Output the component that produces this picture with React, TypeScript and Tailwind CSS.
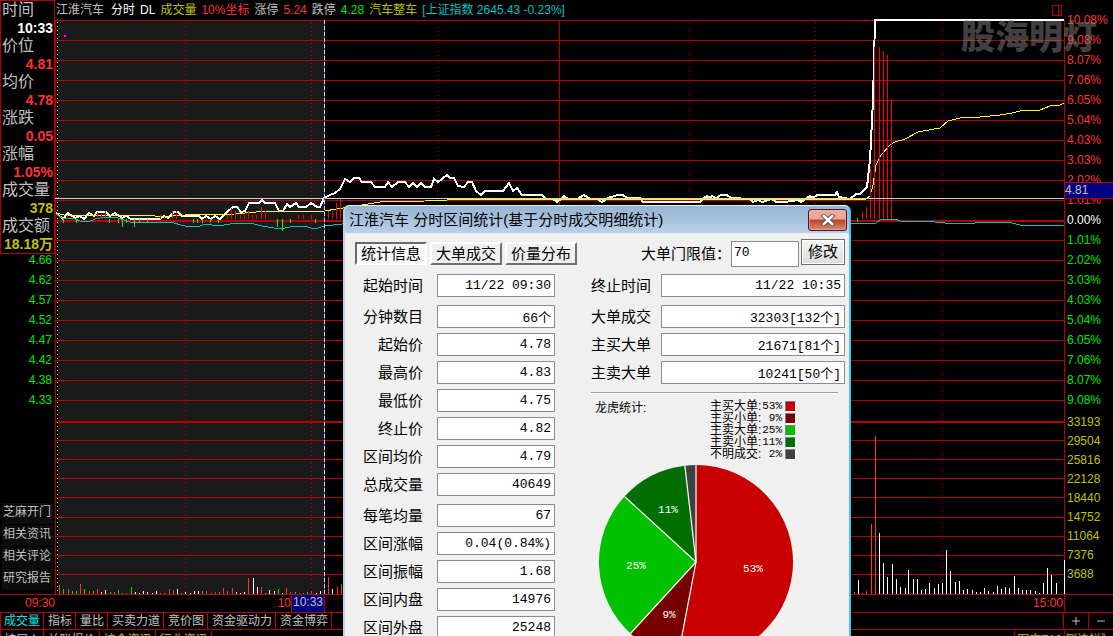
import React from "react";
import { Minus, Plus } from "lucide-react";

const SANS = "font-['Liberation_Sans','Noto_Sans_CJK_SC',sans-serif]";
const MONO = "font-['Liberation_Mono','Noto_Sans_CJK_SC',monospace]";

const quote = [
  { label: "时间", value: "10:33", tone: "text-white" },
  { label: "价位", value: "4.81", tone: "text-[#ff3232]" },
  { label: "均价", value: "4.78", tone: "text-[#ff3232]" },
  { label: "涨跌", value: "0.05", tone: "text-[#ff3232]" },
  { label: "涨幅", value: "1.05%", tone: "text-[#ff3232]" },
  { label: "成交量", value: "378", tone: "text-[#c0c000]" },
  { label: "成交额", value: "18.18万", tone: "text-[#c0c000]" },
];

const lowPrices = ["4.66", "4.62", "4.57", "4.52", "4.47", "4.42", "4.38", "4.33"];
const sideLinks = ["芝麻开门", "相关资讯", "相关评论", "研究报告"];
const upPercents = ["10.08%", "9.08%", "8.07%", "7.06%", "6.05%", "5.04%", "4.03%", "3.03%", "2.02%", "1.01%"];
const downPercents = ["1.01%", "2.02%", "3.03%", "4.03%", "5.04%", "6.05%", "7.06%", "8.07%", "9.08%"];
const volumes = ["33193", "29504", "25816", "22128", "18440", "14752", "11064", "7376", "3688"];

const gridRows = [
  20, 40, 60, 80, 100, 120, 140, 160, 180, 200, 240, 260, 280, 300, 320, 340, 360, 380, 400,
  440, 459, 478, 497, 517, 536, 555, 574, 594,
];
const dottedColumns = [185, 311, 437, 689, 815, 942];

const priceLine =
  "56,213 63,219 68,213 75,218 80,216 84,219 89,213 94,216 97,212 106,212 110,216 115,213 122,218 126,216 131,219 160,219 164,216 168,218 174,212 178,212 182,216 199,216 202,219 206,216 211,219 215,216 220,219 227,212 233,207 237,207 241,212 245,211 249,203 259,203 262,200 265,203 275,203 279,211 283,211 287,204 290,207 296,203 299,207 306,207 311,203 317,207 320,207 324,198 330,195 335,193 340,189 345,179 350,182 354,178 359,178 362,182 371,182 375,187 385,187 388,182 392,187 398,182 405,182 409,187 413,183 417,187 421,183 425,187 431,187 434,179 438,182 447,175 450,178 454,178 458,186 464,187 468,182 472,182 476,191 481,195 485,191 503,191 509,183 513,191 517,188 522,195 542,195 546,199 553,199 557,202 561,199 564,196 568,199 577,199 584,195 590,199 597,199 602,202 608,198 618,195 623,195 627,198 640,198 643,202 700,202 704,198 707,196 709,198 712,196 716,198 721,195 727,195 731,198 750,199 753,202 758,200 762,202 772,199 776,202 785,202 798,200 801,202 807,198 810,196 813,198 817,195 835,195 837,192 839,197 850,199 856,194 860,194 867,187 870,160 873,100 875,20 1064,20";
const averageLine =
  "56,213 64,215 83,216 92,215 150,215 160,217 185,215 235,214 256,212 275,211 324,211 350,207 380,202 425,201 447,200 660,199 866,199 870,196 873,185 876,165 881,155 890,145 895,142 905,139 918,132 940,128 948,121 960,118 980,117 1000,115 1012,113 1020,111 1040,110 1050,106 1060,105 1064,103";
const indexLine =
  "56,214 62,218 75,219 80,221 88,222 95,219 105,217 118,218 130,222 150,223 170,222 185,226 200,226 206,224 218,226 230,224 250,223 262,226 280,229 290,227 305,226 314,229 325,226 342,224 852,223 876,223 881,219 895,219 900,221 935,222 955,224 975,223 1000,222 1012,223 1020,225 1045,226 1064,225";

const momentum: [number, number, number, string][] = [
  [67, 215, 219, "#f00"], [97, 212, 219, "#f00"], [101, 214, 219, "#f00"], [105, 211, 219, "#f00"],
  [160, 215, 219, "#f00"], [172, 211, 219, "#f00"], [176, 211, 219, "#f00"], [227, 215, 219, "#f00"],
  [231, 208, 219, "#f00"], [235, 211, 219, "#f00"], [240, 215, 219, "#f00"], [244, 215, 219, "#f00"],
  [248, 211, 219, "#f00"], [252, 215, 219, "#f00"], [256, 215, 219, "#f00"], [261, 207, 219, "#f00"],
  [265, 211, 219, "#f00"], [298, 215, 219, "#f00"], [303, 215, 219, "#f00"], [311, 215, 219, "#f00"],
  [328, 211, 219, "#f00"], [332, 211, 219, "#f00"], [336, 203, 219, "#f00"], [340, 199, 219, "#f00"],
  [862, 211, 219, "#f00"], [866, 207, 219, "#f00"], [870, 166, 219, "#f00"], [874, 47, 219, "#f00"],
  [879, 47, 219, "#f00"], [883, 51, 219, "#f00"], [887, 55, 219, "#f00"], [891, 99, 219, "#f00"],
  [63, 219, 223, "#0f0"], [76, 219, 223, "#0f0"], [109, 219, 223, "#0f0"], [118, 219, 223, "#0f0"],
  [122, 219, 227, "#0f0"], [126, 219, 223, "#0f0"], [134, 219, 227, "#0f0"], [139, 219, 223, "#0f0"],
  [147, 219, 223, "#0f0"], [193, 219, 223, "#0f0"], [197, 219, 223, "#0f0"], [202, 219, 223, "#0f0"],
  [210, 219, 223, "#0f0"], [218, 219, 223, "#0f0"], [277, 219, 227, "#0f0"], [282, 219, 231, "#0f0"],
  [290, 219, 223, "#0f0"], [315, 219, 223, "#0f0"], [857, 218, 222, "#0f0"],
];

const R = "#ff3232";
const W = "#ffffff";
const G = "#00e600";
const trades: [number, number, string][] = [
  [59, 9, R], [63, 5, G], [68, 5, R], [72, 3, G], [76, 3, G], [80, 10, R], [84, 5, G], [89, 3, R], [93, 3, G],
  [97, 5, R], [101, 2, W], [105, 4, W], [110, 2, G], [114, 2, R], [118, 4, G], [122, 1, G], [126, 1, R],
  [131, 7, G], [135, 2, W], [139, 1, W], [143, 3, W], [147, 2, W], [152, 1, W], [156, 3, W], [160, 1, R],
  [164, 1, G], [169, 5, R], [173, 4, R], [177, 5, W], [181, 1, G], [185, 2, W], [190, 1, W], [194, 3, W],
  [198, 3, W], [202, 3, G], [206, 3, R], [211, 1, G], [215, 2, R], [219, 2, G], [223, 6, R], [227, 3, R],
  [232, 6, R], [236, 2, W], [240, 1, W], [244, 2, W], [248, 16, R], [253, 16, W], [257, 7, W], [261, 7, R],
  [265, 1, G], [269, 4, W], [274, 3, W], [278, 5, G], [282, 1, W], [286, 6, R], [290, 2, R], [295, 2, G],
  [299, 1, R], [303, 1, G], [307, 2, G], [311, 3, R], [316, 1, W], [320, 3, W], [328, 17, R], [332, 5, W],
  [337, 7, R], [341, 10, R],
  [854, 2, R], [858, 14, W], [862, 1, R], [866, 3, R], [871, 70, R], [875, 158, R], [879, 61, W], [883, 31, W],
  [887, 17, W], [892, 30, W], [896, 15, W], [900, 7, W], [905, 6, W], [908, 24, W], [913, 15, W], [917, 15, W],
  [921, 4, W], [925, 5, W], [929, 11, W], [934, 6, W], [938, 10, W], [942, 11, W], [946, 44, W], [950, 23, W],
  [955, 12, W], [959, 13, W], [963, 4, W], [967, 5, W], [972, 4, W], [976, 2, W], [980, 2, W], [984, 6, W],
  [988, 3, W], [993, 2, W], [997, 8, W], [1001, 5, W], [1005, 7, W], [1009, 6, W], [1014, 18, W], [1018, 6, W],
  [1022, 4, W], [1026, 4, W], [1030, 4, W], [1035, 3, W], [1039, 1, W], [1043, 11, W], [1047, 26, W],
  [1051, 19, W], [1056, 11, W], [1064, 34, W],
];

function Chart() {
  return (
    <svg viewBox="55 20 1010 575" preserveAspectRatio="none" shapeRendering="crispEdges" className="block h-[575px] w-full overflow-visible">
      <rect x="58" y="20" width="266" height="574" fill="#1a1a1a" />
      {gridRows.map((y) => (
        <rect key={y} x="55" y={y} width="1010" height="1" fill="#b40000" />
      ))}
      <rect x="55" y="220" width="1010" height="2" fill="#b40000" />
      <rect x="55" y="421" width="1010" height="2" fill="#b40000" />
      {dottedColumns.map((x) => (
        <line key={x} x1={x + 0.5} x2={x + 0.5} y1="23" y2="594" stroke="#b40000" strokeDasharray="1 3" />
      ))}
      <rect x="559" y="20" width="1" height="574" fill="#b40000" />
      <rect x="55" y="20" width="1" height="575" fill="#b40000" />
      <rect x="1064" y="20" width="1" height="575" fill="#b40000" />
      <line x1="57.5" x2="57.5" y1="22" y2="594" stroke="#ffff00" strokeDasharray="1 3" />
      {trades.map(([x, h, fill]) => (
        <rect key={x} x={x} y={594 - h} width="1" height={h} fill={fill} />
      ))}
      <rect x="64" y="35" width="2" height="2" fill="#ff00ff" />
      <polyline points={priceLine} fill="none" stroke="#ffffff" strokeWidth="2" />
      <polyline points={averageLine} fill="none" stroke="#ffff00" strokeWidth="1" />
      <polyline points={indexLine} fill="none" stroke="#00c0c0" strokeWidth="1" />
      {momentum.map(([x, top, bottom, fill]) => (
        <rect key={x} x={x} y={top} width="1" height={bottom - top} fill={fill} />
      ))}
      <rect x="55" y="198" width="1009" height="1" fill="#d0d0d0" />
      <rect x="324" y="20" width="1" height="574" fill="#3c3cc8" />
      <line x1="324.5" x2="324.5" y1="20" y2="594" stroke="#d8d8d8" strokeDasharray="4 2" />
    </svg>
  );
}

function Field({ id, label, value, wide = false }: { id: string; label: string; value: string; wide?: boolean }) {
  return (
    <div className={wide ? "flex items-center gap-[10px]" : "flex items-center gap-[14px]"}>
      <label htmlFor={id} className={wide ? "w-[60px] text-right text-[15px] leading-[23px]" : "w-[68px] text-right text-[15px] leading-[23px]"}>
        {label}
      </label>
      <input
        id={id}
        readOnly
        defaultValue={value}
        className={`${MONO} ${wide ? "w-[184px]" : "w-[118px]"} h-[23px] border border-[#8c8c8c] bg-white px-[3px] text-right text-[13px] outline-none`}
      />
    </div>
  );
}

const leftFields = [
  [["起始时间", "11/22 09:30"]],
  [["分钟数目", "66个"], ["起始价", "4.78"], ["最高价", "4.83"], ["最低价", "4.75"], ["终止价", "4.82"], ["区间均价", "4.79"], ["总成交量", "40649"]],
  [["每笔均量", "67"], ["区间涨幅", "0.04(0.84%)"], ["区间振幅", "1.68"], ["区间内盘", "14976"], ["区间外盘", "25248"]],
];
const rightFields = [
  [["终止时间", "11/22 10:35"]],
  [["大单成交", "32303[132个]"], ["主买大单", "21671[81个]"], ["主卖大单", "10241[50个]"]],
];

function FieldColumn({ groups, wide = false }: { groups: string[][][]; wide?: boolean }) {
  return (
    <div className="flex flex-col gap-2">
      {groups.map((group, i) => (
        <div key={i} className="flex flex-col gap-[5px]">
          {group.map(([label, value]) => (
            <Field key={label} id={`${wide ? "end" : "start"}-${label}`} label={label} value={value} wide={wide} />
          ))}
        </div>
      ))}
    </div>
  );
}

const legend = [
  { label: "主买大单:", value: "53%", swatch: "bg-[#c80000]" },
  { label: "主买小单:", value: "9%", swatch: "bg-[#780000]" },
  { label: "主卖大单:", value: "25%", swatch: "bg-[#00c000]" },
  { label: "主卖小单:", value: "11%", swatch: "bg-[#006e00]" },
  { label: "不明成交:", value: "2%", swatch: "bg-[#404040]" },
];

const slices = [
  { from: 0, to: 190.8, fill: "#c80000", text: "53%", x: 155, y: 108 },
  { from: 190.8, to: 222.5, fill: "#780000", text: "9%", x: 71, y: 154 },
  { from: 222.5, to: 312.5, fill: "#00c000", text: "25%", x: 38, y: 105 },
  { from: 312.5, to: 353.4, fill: "#006e00", text: "11%", x: 70, y: 49 },
  { from: 353.4, to: 360, fill: "#404040", text: "", x: 0, y: 0 },
];

function Pie() {
  const point = (deg: number) => {
    const a = (deg * Math.PI) / 180;
    return `${98 + 97 * Math.sin(a)} ${98 - 97 * Math.cos(a)}`;
  };
  return (
    <svg viewBox="0 0 196 196" className="h-[196px] w-[196px]">
      {slices.map((s) => (
        <path
          key={s.from}
          d={`M98 98 L${point(s.from)} A97 97 0 ${s.to - s.from > 180 ? 1 : 0} 1 ${point(s.to)} Z`}
          fill={s.fill}
        />
      ))}
      {slices.map((s) => (
        <path key={s.to} d={`M98 98 L${point(s.to)}`} stroke="#ffffff" strokeWidth="1.2" />
      ))}
      {slices.map((s) => (
        <text key={s.to} x={s.x} y={s.y} textAnchor="middle" fill="#ffffff" className={`${MONO} text-[11px]`}>
          {s.text}
        </text>
      ))}
    </svg>
  );
}

function StatsDialog() {
  return (
    <section
      role="dialog"
      aria-labelledby="dialog-title"
      className={`${SANS} absolute left-[343px] top-[205px] w-[508px] overflow-hidden rounded-t-[6px] border-x-2 border-t border-l-[#b9d1ea] border-r-[#48c4f0] border-t-[#e8f0fa] bg-[#f0f0f0] text-black`}
    >
      <header className="flex h-[27px] items-center justify-between bg-linear-to-b from-[#98b3d1] to-[#b9d1ea] pl-1">
        <h1 id="dialog-title" className="text-[15px] leading-[27px]">江淮汽车 分时区间统计(基于分时成交明细统计)</h1>
        <button
          type="button"
          aria-label="关闭"
          className="mr-[2px] flex h-[22px] w-[39px] items-center justify-center rounded-[3px] border border-[#431422] bg-linear-to-b from-[#eba99a] from-45% via-[#bc3e26] via-50% to-[#d68a74] ring-1 ring-inset ring-[#f0b8ac]/60"
        >
          <svg viewBox="0 0 14 12" className="h-3 w-[14px]">
            <path d="M2.8 2 L11.2 10 M11.2 2 L2.8 10" stroke="#4e4653" strokeWidth="4.4" strokeLinecap="square" />
            <path d="M2.8 2 L11.2 10 M11.2 2 L2.8 10" stroke="#ffffff" strokeWidth="2.6" strokeLinecap="square" />
          </svg>
        </button>
      </header>
      <div className="pl-[10px] pr-1 pt-[6px]">
        <div className="flex justify-between">
          <nav className="flex gap-[3px] pt-[3px]">
            <button type="button" className="h-[23px] w-[72px] border-2 border-b-white border-l-[#696969] border-r-white border-t-[#696969] bg-[#f8f8f8] text-[15px] leading-[19px]">统计信息</button>
            <button type="button" className="h-[23px] w-[72px] border-2 border-b-[#707070] border-l-white border-r-[#707070] border-t-white text-[15px] leading-[19px]">大单成交</button>
            <button type="button" className="h-[23px] w-[72px] border-2 border-b-[#707070] border-l-white border-r-[#707070] border-t-white text-[15px] leading-[19px]">价量分布</button>
          </nav>
          <div className="flex">
            <label htmlFor="threshold" className="pt-[3px] text-[15px] leading-[23px]">大单门限值：</label>
            <input id="threshold" defaultValue="70" className={`${MONO} mt-[2px] h-[26px] w-[68px] border border-[#8c8c8c] bg-white px-[2px] pb-[3px] text-[13px] outline-none`} />
            <button type="button" className="ml-[2px] h-[26px] w-[44px] border border-[#707070] bg-linear-to-b from-[#f4f4f4] to-[#dcdcdc] text-[15px] leading-[22px] ring-1 ring-inset ring-white">修改</button>
          </div>
        </div>
        <div className="flex justify-between pt-[7px]">
          <FieldColumn groups={leftFields} />
          <div className="flex w-[254px] flex-col">
            <FieldColumn groups={rightFields} wide />
            <hr className="mr-[7px] mt-2 border-0 border-b border-t border-b-white border-t-[#a0a0a0]" />
            <div className="flex justify-between pl-1 pr-[49px] pt-[6px] text-[12px]">
              <p className="leading-[16px]">龙虎统计:</p>
              <ul>
                {legend.map((item) => (
                  <li key={item.label} className="flex h-3 items-center leading-3">
                    <span className="w-[52px]">{item.label}</span>
                    <span className={`${MONO} w-[20px] text-right text-[11px]`}>{item.value}</span>
                    <span className={`${item.swatch} ml-[3px] h-[11px] w-[11px] border border-b-white border-l-[#808080] border-r-white border-t-[#808080]`} />
                  </li>
                ))}
              </ul>
            </div>
            <div className="pl-[7px] pt-[4px]">
              <Pie />
            </div>
          </div>
        </div>
      </div>
    </section>
  );
}

const tabs = ["成交量", "指标", "量比", "买卖力道", "竞价图", "资金驱动力", "资金博弈"];

export default function App() {
  return (
    <main className={`${SANS} relative flex h-screen flex-col overflow-hidden bg-black text-[12px] text-[#c0c0c0]`}>
      <div className="flex h-[595px] shrink-0 border-b border-[#b40000]">
        <aside className="flex w-[55px] shrink-0 flex-col">
          <dl className="border border-[#b40000] pr-[1px] pl-[1px]">
            {quote.map((q) => (
              <React.Fragment key={q.label}>
                <dt className="text-[16px] leading-[18px] whitespace-nowrap">{q.label}</dt>
                <dd className={`${q.tone} flex justify-end text-[14px] font-bold leading-[18px] whitespace-nowrap`}>{q.value}</dd>
              </React.Fragment>
            ))}
          </dl>
          <ul className="-mt-1 pr-[3px] text-right leading-[20px] text-[#00e600]">
            {lowPrices.map((p) => <li key={p}>{p}</li>)}
          </ul>
          <nav className="mt-auto flex flex-col gap-[1px] pb-1 pl-[2px] pr-[2px]">
            {sideLinks.map((l) => (
              <a key={l} href="#" className="h-[21px] bg-[#0d0d0d] pl-[1px] leading-[18px] whitespace-nowrap">{l}</a>
            ))}
          </nav>
        </aside>

        <div className="min-w-0 flex-1">
          <header className="flex h-[20px] items-center gap-[5px] pl-[1px] leading-[20px] whitespace-nowrap">
            <span className="mr-[2px]">江淮汽车</span>
            <span className="text-white">分时</span>
            <span className="text-white">DL</span>
            <span className="text-[#c0c000]">成交量</span>
            <span className="text-[#ff3232]">10%坐标</span>
            <span>涨停</span>
            <span className="text-[#ff3232]">5.24</span>
            <span>跌停</span>
            <span className="text-[#00e600]">4.28</span>
            <span className="text-[#c0c000]">汽车整车</span>
            <span className="text-[#00c0c0]">[上证指数 2645.43 -0.23%]</span>
            <svg viewBox="0 0 10 11" shapeRendering="crispEdges" className="ml-auto mr-[3px] h-[11px] w-[10px]">
              <path d="M0.5 0.5 H9.5 V10.5 H0.5 Z M6.5 0.5 V10.5" fill="none" stroke="#b40000" />
            </svg>
          </header>
          <Chart />
        </div>

        <aside className="relative w-[48px] shrink-0 pl-[2px] pt-[10px]">
          <ul className="leading-[20px]">
            {upPercents.map((p) => <li key={p} className="text-[#ff3232]">{p}</li>)}
            <li className="text-white">0.00%</li>
            {downPercents.map((p) => <li key={p} className="text-[#00e600]">{p}</li>)}
          </ul>
          <ul className="pt-[3px] leading-[19px] text-[#c0c000]">
            {volumes.map((v) => <li key={v}>{v}</li>)}
          </ul>
          <div className="absolute left-0 right-0 top-[182px] h-[17px] border-y border-[#b40000] bg-[#000080] leading-[15px]">4.81</div>
          <div className="absolute right-[16px] top-[15px] text-[34px] font-black leading-[44px] whitespace-nowrap text-[#808080]/50">股海明灯</div>
        </aside>
      </div>

      <div className="flex h-[18px] shrink-0 justify-between border-b border-[#b40000] leading-[16px] text-[#ff3232]">
        <div className="flex">
          <span className="w-[55px] text-right">09:30</span>
          <span className="w-[236px] text-right">10</span>
          <span className="w-[34px] border-r border-l border-[#b40000] bg-[#000080] text-center leading-[14px] text-[#c0c0c0]">10:33</span>
        </div>
        <span className="mr-[48px] border-r border-[#b40000] pr-[1px]">15:00</span>
      </div>

      <nav className="flex h-[17px] shrink-0 border-b border-l border-[#b40000] leading-[17px]">
        {tabs.map((t, i) => (
          <button key={t} type="button" className={i === 0 ? "border-r border-[#b40000] pl-[3px] pr-[3px] text-[#00e6e6]" : "border-r border-[#b40000] pl-1 pr-[3px]"}>
            {t}
          </button>
        ))}
        <button type="button" aria-label="放大" className="ml-auto flex w-[26px] items-center justify-center border-x border-[#b40000]"><Plus size={12} /></button>
        <button type="button" aria-label="缩小" className="flex w-6 items-center justify-center"><Minus size={12} /></button>
      </nav>

      <nav className="flex h-5 shrink-0 border-l border-[#b40000] leading-[20px] whitespace-nowrap">
        <button type="button" className="w-[43px] border-r border-[#b40000]">扩展∧</button>
        <button type="button" className="w-[56px] border-r border-[#b40000]">关联报价</button>
        <button type="button" className="w-[56px] border-r border-[#b40000] text-[#c0c000]">综合资讯</button>
        <button type="button" className="w-[56px] border-r border-[#b40000] text-[#c0c000]">行业资讯</button>
        <button type="button" className="ml-auto w-[51px] border-x border-[#b40000] text-[#c0c000]">图文F10</button>
        <button type="button" className="w-[48px] text-[#c0c000]">侧边栏》</button>
      </nav>

      <StatsDialog />
    </main>
  );
}
